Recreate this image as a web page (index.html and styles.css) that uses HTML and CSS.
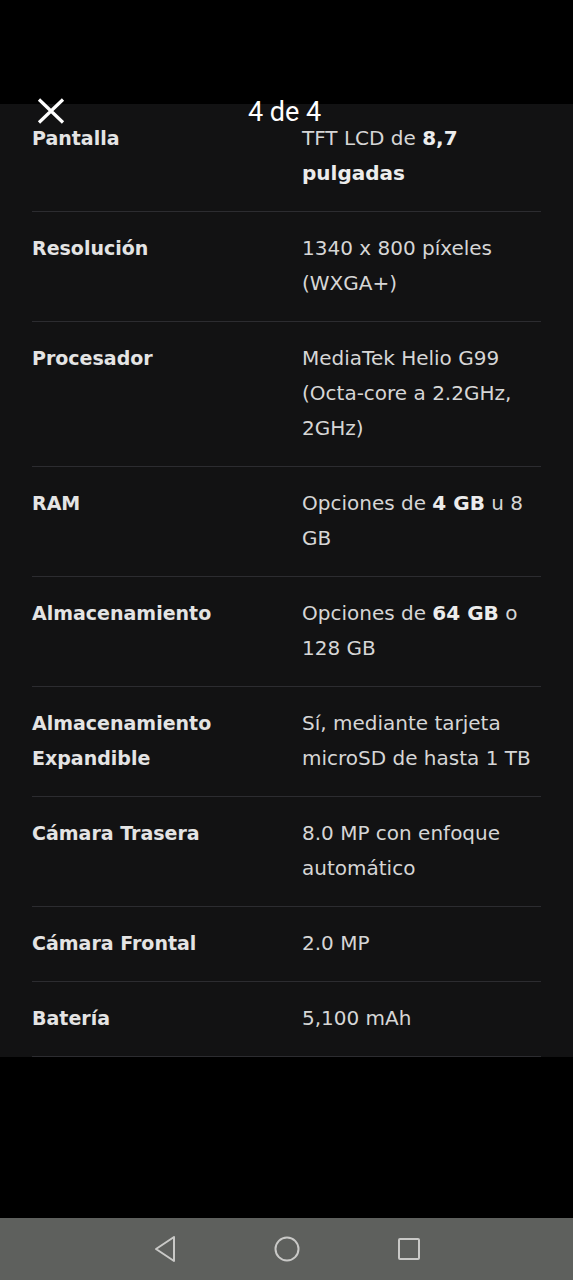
FILE: index.html
```html
<!DOCTYPE html>
<html lang="es">
<head>
  <meta charset="UTF-8" />
  <meta name="viewport" content="width=device-width, initial-scale=1.0" />
  <title>Especificaciones</title>
  <link rel="stylesheet" href="styles.css">
</head>
<body>
  <div class="screen">
    <div class="status-gap"></div>

    <div class="stage">
      <div class="viewer-top">
        <svg class="close" width="28" height="26" viewBox="0 0 28 26">
          <path d="M2 1.5 L26 24.5 M26 1.5 L2 24.5" stroke="#fff" stroke-width="3.2" fill="none" />
        </svg>
        <span class="counter">4 de 4</span>
      </div>

      <main class="viewer">
        <div class="specs">
          <div class="row">
            <div class="label">Pantalla</div>
            <div class="value">TFT LCD de <b>8,7 pulgadas</b></div>
          </div>
          <div class="row">
            <div class="label">Resolución</div>
            <div class="value">1340 x 800 píxeles (WXGA+)</div>
          </div>
          <div class="row">
            <div class="label">Procesador</div>
            <div class="value">MediaTek Helio G99 (Octa-core a 2.2GHz, 2GHz)</div>
          </div>
          <div class="row">
            <div class="label">RAM</div>
            <div class="value">Opciones de <b>4 GB</b> u 8 GB</div>
          </div>
          <div class="row">
            <div class="label">Almacenamiento</div>
            <div class="value">Opciones de <b>64 GB</b> o 128 GB</div>
          </div>
          <div class="row">
            <div class="label">Almacenamiento Expandible</div>
            <div class="value">Sí, mediante tarjeta microSD de hasta 1 TB</div>
          </div>
          <div class="row">
            <div class="label">Cámara Trasera</div>
            <div class="value">8.0 MP con enfoque automático</div>
          </div>
          <div class="row">
            <div class="label">Cámara Frontal</div>
            <div class="value">2.0 MP</div>
          </div>
          <div class="row">
            <div class="label">Batería</div>
            <div class="value">5,100 mAh</div>
          </div>
        </div>
      </main>
    </div>

    <div class="bottom-gap"></div>

    <nav class="navbar">
      <svg width="24" height="28" viewBox="0 0 24 28">
        <path d="M21 2 L3 14 L21 26 Z" stroke="#c9c9c7" stroke-width="2" fill="none" stroke-linejoin="round" />
      </svg>
      <svg width="28" height="28" viewBox="0 0 28 28">
        <circle cx="14" cy="14" r="11.5" stroke="#c9c9c7" stroke-width="2" fill="none" />
      </svg>
      <svg width="24" height="24" viewBox="0 0 24 24">
        <rect x="2" y="2" width="20" height="20" rx="1" stroke="#c9c9c7" stroke-width="2" fill="none" />
      </svg>
    </nav>
  </div>
</body>
</html>
```

FILE: styles.css
```css
body {
  margin: 0;
  background: #000;
  font-family: "DejaVu Sans", Arial, sans-serif;
}
.screen {
  height: 1280px;
  display: flex;
  flex-direction: column;
}
.status-gap {
  height: 104px;
}
.stage {
  position: relative;
}
.viewer {
  height: 953px;
  overflow: hidden;
  background: #121213;
}
.viewer-top {
  position: absolute;
  top: -8px;
  left: 0;
  right: 0;
  height: 32px;
  z-index: 2;
}
.close {
  position: absolute;
  left: 37px;
  top: 2px;
}
.counter {
  position: absolute;
  left: 248px;
  top: 0;
  color: #fff;
  font-family: Roboto, sans-serif;
  font-size: 27px;
  line-height: 32px;
}
.specs {
  margin: -2px 32px 0;
}
.row {
  display: flex;
  padding: 19px 0 20px;
  border-bottom: 1px solid #2c2c30;
  line-height: 35px;
}
.label {
  width: 200px;
  margin-right: 70px;
  font-size: 19px;
  font-weight: 700;
  color: #e4e4e4;
}
.value {
  flex: 1;
  font-size: 20px;
  color: #d6d6d6;
}
.value b {
  color: #ececec;
}
.bottom-gap {
  flex: 1;
}
.navbar {
  height: 62px;
  background: #5e605d;
  display: flex;
  align-items: center;
  justify-content: center;
  gap: 96px;
}
```
